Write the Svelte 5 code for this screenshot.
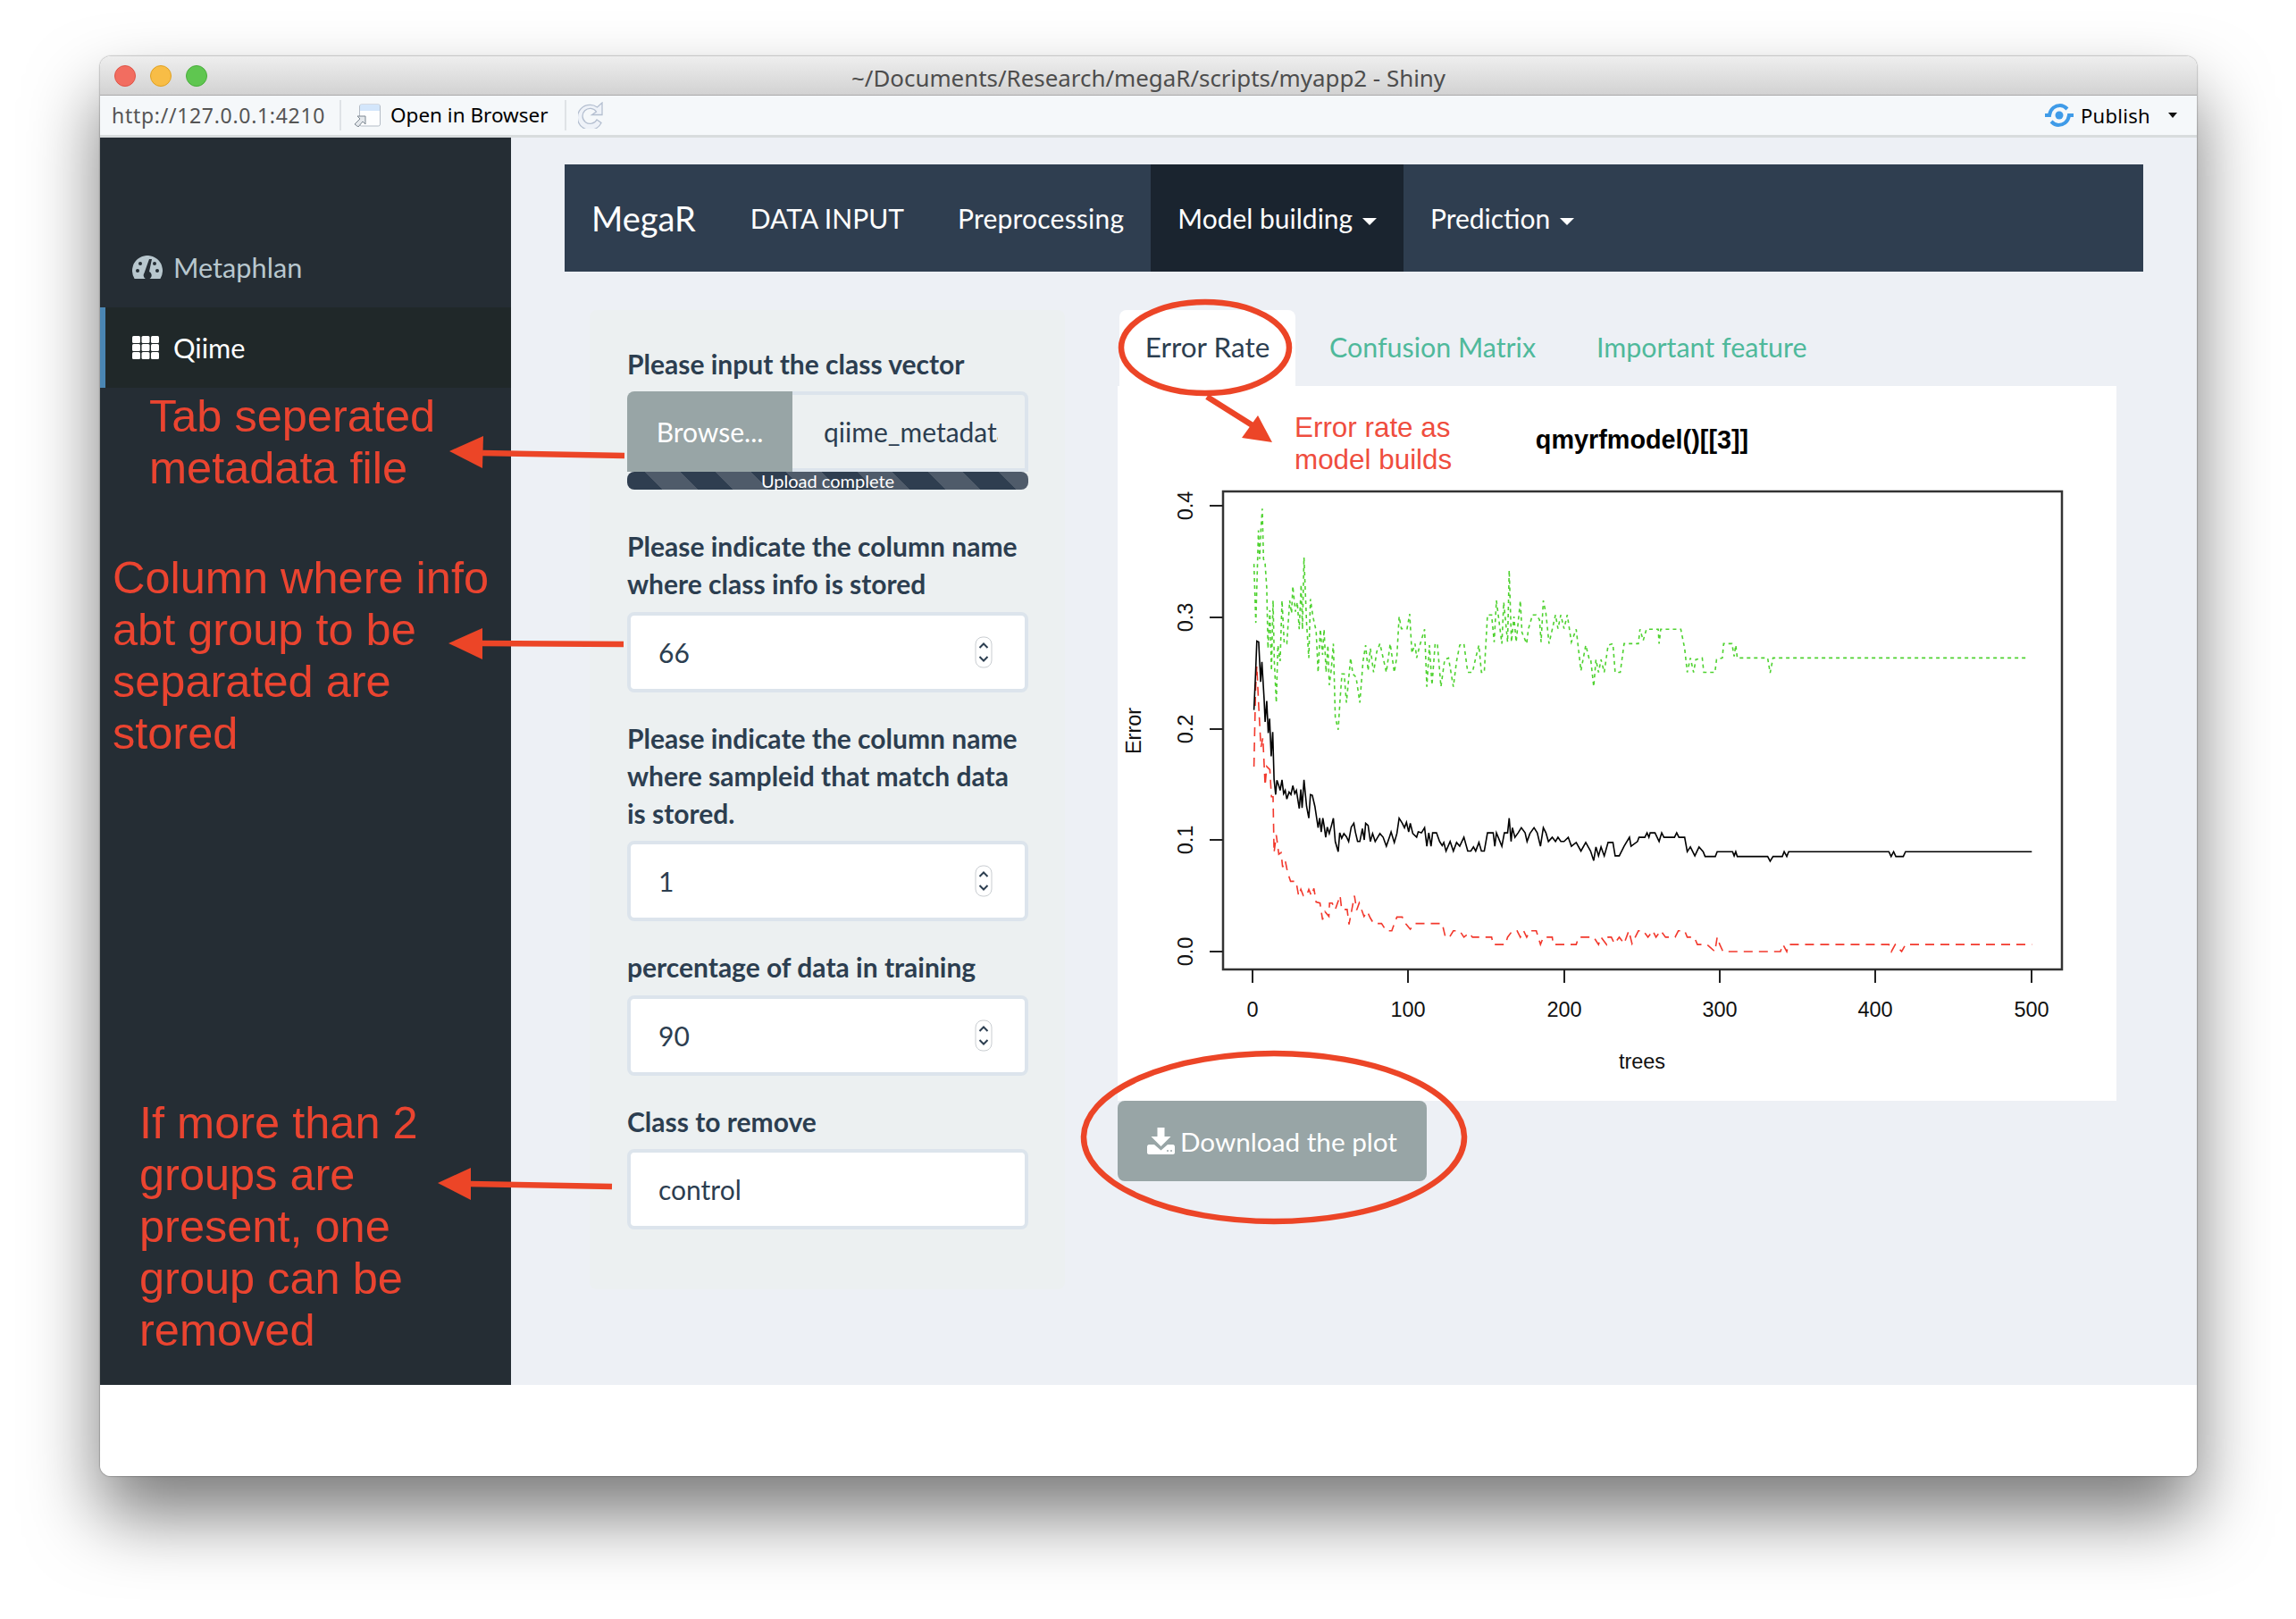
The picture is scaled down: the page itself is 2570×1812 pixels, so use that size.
<script>
  const numberFields = [
    { label: 'Please indicate the column name where class info is stored', value: '66' },
    { label: 'Please indicate the column name where sampleid that match data is stored.', value: '1' },
    { label: 'percentage of data in training', value: '90' }
  ];

  // traced off the plot, in 2.8x crop coordinates: [crop x origin, points...]
  const blackA = [290,713,295,600,299,497,305,500,311,625,315,562,322,680,325,750,330,685,335,785,339,740,344,858,349,782,353,930,358,978,362,933,368,950,372,965,378,932,383,975,388,965,393,992,400,970,406,978,412,950,418,975,423,965,432,1022,437,962,441,1020,447,932,455,1015,462,1052,467,978,473,980,481,1015,491,1082,496,1052,501,1095,506,1052,510,1075,515,1112,520,1080,526,1100,533,1075,539,1052,545,1125,554,1157,559,1098,565,1115,572,1100,580,1110,587,1125,595,1080,603,1068,608,1095,615,1125,622,1125,630,1085,636,1120,640,1068,648,1075,655,1125,662,1100,670,1125,685,1100,695,1112,705,1140,715,1110,720,1095,730,1128,738,1100,745,1052,755,1068,762,1082,768,1065,775,1095,780,1068,788,1100,800,1112,805,1095,815,1098,825,1082,832,1140,838,1098,845,1140,850,1098,862,1098,872,1125,880,1138,885,1128,892,1155,905,1125,915,1155,925,1128,935,1140,948,1112,960,1155,970,1155,978,1142,985,1155,995,1128,1003,1155,1012,1155,1022,1098,1040,1098,1045,1140,1050,1098,1067,1140,1075,1098,1085,1098,1090,1052,1096,1125,1100,1082,1108,1112,1118,1098,1128,1082,1140,1098,1146,1125,1155,1100,1168,1082,1178,1098,1188,1140,1197,1082,1205,1098,1213,1125,1225,1112,1235,1125,1243,1112,1252,1125,1262,1125,1275,1112,1285,1140,1300,1128,1315,1155,1330,1128,1345,1155,1355,1185,1362,1142,1370,1170,1378,1142,1388,1170,1400,1128];
  const blackB = [5,1128,15,1128,22,1170,35,1170,50,1140,67,1112,72,1140,92,1125,97,1112,115,1112,122,1098,128,1112,132,1098,147,1098,160,1125,168,1098,175,1112,208,1112,215,1098,222,1112,240,1112,248,1157,258,1142,272,1170,285,1142,298,1157,304,1172,336,1172,342,1157,390,1157,395,1170,400,1157,405,1172,500,1172,508,1187,517,1172,546,1172,552,1157,560,1172,566,1157,880,1157,887,1172,895,1157,902,1172,925,1172,932,1157,1328,1157];
  const greenA = [290,255,296,440,300,300,304,150,308,240,312,145,316,82,320,240,325,255,330,330,334,520,340,400,345,590,350,370,354,560,360,690,365,510,372,560,378,370,385,505,393,505,402,370,408,410,412,325,420,405,426,375,432,460,438,320,442,460,447,235,455,440,462,550,467,365,475,420,485,465,491,595,498,460,505,540,510,460,516,595,522,510,526,635,532,590,539,505,545,735,554,775,560,680,566,600,573,600,580,690,593,550,600,600,610,610,622,690,632,560,640,510,648,590,655,520,665,595,675,530,685,505,695,550,705,595,717,505,730,595,738,545,745,420,752,458,770,458,778,412,785,535,795,505,800,550,810,510,825,460,832,640,840,510,848,635,858,505,865,505,876,640,888,555,900,550,915,640,925,560,935,510,948,505,960,595,975,595,985,550,995,510,1003,595,1012,595,1022,415,1035,415,1043,500,1050,370,1067,505,1073,375,1085,500,1090,275,1097,500,1105,420,1112,500,1125,370,1130,470,1145,505,1150,460,1163,415,1175,415,1185,430,1190,500,1197,370,1205,410,1215,505,1225,460,1235,415,1243,458,1252,415,1262,458,1272,415,1285,500,1300,460,1315,590,1330,510,1340,550,1345,550,1355,640,1362,555,1370,595,1378,555,1388,595,1400,510];
  const greenB = [15,505,22,595,38,595,50,505,95,505,100,460,110,495,120,460,157,460,160,505,165,460,228,460,240,520,248,595,258,550,268,595,275,555,295,550,300,595,335,595,340,555,358,550,362,505,388,505,395,545,400,510,405,550,500,550,508,597,517,550,1318,550];
  const redA = [290,890,295,650,299,575,305,700,312,830,318,800,325,950,330,890,340,900,345,985,350,985,353,1160,360,1105,368,1165,375,1160,380,1205,388,1185,395,1220,405,1250,422,1250,430,1295,437,1275,445,1295,455,1295,462,1275,470,1295,478,1272,485,1315,497,1318,505,1370,513,1345,525,1360,527,1318,535,1318,545,1338,560,1295,565,1338,582,1338,588,1385,605,1295,612,1340,620,1318,635,1360,645,1345,655,1365,665,1382,690,1382,705,1405,722,1405,730,1382,738,1362,755,1362,765,1382,780,1400,795,1382,880,1382,890,1425,903,1425,915,1405,935,1405,948,1425,965,1412,975,1425,1035,1425,1040,1448,1078,1448,1085,1425,1100,1405,1115,1405,1125,1425,1135,1405,1145,1425,1155,1405,1175,1405,1188,1448,1197,1425,1225,1425,1228,1448,1300,1448,1308,1425,1355,1425,1370,1448,1378,1425,1395,1448,1400,1425];
  const redB = [10,1425,20,1445,35,1425,50,1445,65,1405,75,1445,95,1405,110,1405,125,1425,140,1405,150,1425,165,1405,180,1425,210,1425,220,1405,240,1405,248,1425,270,1425,280,1448,310,1448,335,1470,342,1425,350,1448,360,1470,540,1470,548,1448,560,1470,566,1448,880,1448,888,1470,900,1448,920,1470,932,1448,1328,1448];

  // crop coordinates -> plot panel coordinates
  function trace(a, b) {
    const pts = [];
    for (let i = 0; i < a.length; i += 2) pts.push(`${(1300 + a[i] / 2.8 - 1251).toFixed(1)},${(540 + a[i + 1] / 2.8 - 432).toFixed(1)}`);
    for (let i = 0; i < b.length; i += 2) pts.push(`${(1800 + b[i] / 2.8 - 1251).toFixed(1)},${(540 + b[i + 1] / 2.8 - 432).toFixed(1)}`);
    return pts.join(' ');
  }

  const xTicks = [[0, 151], [100, 325], [200, 500], [300, 674], [400, 848], [500, 1023]];
  const yTicks = [['0.0', 633], ['0.1', 508], ['0.2', 384], ['0.3', 259], ['0.4', 134]];
</script>

<div class="page">
  <div class="window">
    <div class="titlebar">
      <i class="light red"></i><i class="light yellow"></i><i class="light green"></i>
      <span class="title">~/Documents/Research/megaR/scripts/myapp2 - Shiny</span>
    </div>

    <div class="toolbar">
      <span class="url">http://127.0.0.1:4210</span>
      <span class="sep"></span>
      <svg class="open-icon" width="30" height="26" viewBox="0 0 30 26">
        <rect x="6.5" y="1" width="23" height="24" rx="2" fill="#fdfeff" stroke="#b4bcc6"/>
        <path d="M7 2.5a1.5 1.5 0 0 1 1.5-1.5h19a1.5 1.5 0 0 1 1.5 1.5V8H7z" fill="#d3e6fb"/>
        <path d="M1 23l6-6-3-3h9v9l-3-3-5 6z" fill="#e4e8ec" stroke="#7d8791"/>
      </svg>
      <span class="open">Open in Browser</span>
      <span class="sep"></span>
      <svg class="reload" width="28" height="30" viewBox="0 0 28 30">
        <path d="M20.500 11A8.500 8.500 0 1 0 21 20L26 23.500A14 14 0 1 1 21.500 6L27 1V14.500H15.500Z" fill="#eef2f8" stroke="#b4bfd0" stroke-width="1.300"/>
      </svg>
      <span class="push"></span>
      <svg width="32" height="26" viewBox="0 0 32 26" fill="none" stroke="#3f9be8" stroke-width="4">
        <circle cx="16" cy="13" r="4.500" fill="#3f9be8" stroke="none"/>
        <path d="M0 13H5C6 5 12 2 17 2c3 0 6 2 8 4"/>
        <path d="M32 13H27C26 21 20 24 15 24c-3 0-6-2-8-4"/>
      </svg>
      <span class="publish">Publish</span>
      <i class="publish-caret"></i>
    </div>

    <div class="app">
      <aside class="sidebar">
        <a class="side-item" href="#metaphlan">
          <svg width="34" height="26" viewBox="0 0 34 26">
            <path d="M2.600 26A17 17 0 1 1 31.400 26Z" fill="#b8c7ce"/>
            <g fill="#252d34">
              <circle cx="6" cy="17" r="2"/><circle cx="9" cy="9" r="2"/><circle cx="25" cy="9" r="2"/><circle cx="28" cy="17" r="2"/>
              <path d="M19 4h3l-3 14a4.500 4.500 0 1 1-5.500 1.500z"/>
            </g>
          </svg>
          <span>Metaphlan</span>
        </a>
        <a class="side-item active" href="#qiime">
          <svg width="30" height="26" viewBox="0 0 30 26" fill="#fff">
            {#each [0, 9, 18] as y}
              {#each [0, 10.500, 21] as x}
                <rect {x} {y} width="9" height="8" rx="1.500"/>
              {/each}
            {/each}
          </svg>
          <span>Qiime</span>
        </a>
      </aside>

      <main class="main">
        <nav class="navbar">
          <a class="brand" href="#home">MegaR</a>
          <a class="nav-link" href="#input">DATA INPUT</a>
          <a class="nav-link wide" href="#pre">Preprocessing</a>
          <a class="nav-link current" href="#model">Model building <i class="caret"></i></a>
          <a class="nav-link" href="#predict">Prediction <i class="caret"></i></a>
        </nav>

        <div class="columns">
          <form class="well">
            <div class="field file">
              <label for="meta">Please input the class vector</label>
              <div class="file-row">
                <span class="browse">Browse...</span>
                <input id="meta" class="file-name" readonly value="qiime_metadata.txt" />
              </div>
              <div class="progress"><span>Upload complete</span></div>
            </div>

            {#each numberFields as f}
              <div class="field">
                <label for={f.value}>{f.label}</label>
                <div class="input-box">
                  <input id={f.value} value={f.value} />
                  <svg width="20" height="36" viewBox="0 0 20 36" fill="none">
                    <rect x="1" y="1" width="18" height="34" rx="8" fill="#fff" stroke="#c9cdd1"/>
                    <path d="M5.500 13l4.500-4.500 4.500 4.500M5.500 23l4.500 4.500 4.500-4.500" stroke="#2c3e50" stroke-width="2"/>
                  </svg>
                </div>
              </div>
            {/each}

            <div class="field last">
              <label for="cls">Class to remove</label>
              <div class="input-box"><input id="cls" value="control" /></div>
            </div>
          </form>

          <section class="results">
            <div class="tabs">
              <a class="tab active" href="#err">Error Rate</a>
              <a class="tab" href="#conf">Confusion Matrix</a>
              <a class="tab" href="#imp">Important feature</a>
            </div>
            <div class="panel">
              <svg class="plot" width="1118" height="800" viewBox="0 0 1118 800">
                <text x="587" y="70" class="plot-title" text-anchor="middle">qmyrfmodel()[[3]]</text>
                <rect x="118" y="118" width="939" height="535" fill="none" stroke="#333" stroke-width="2.500"/>
                <polyline points={trace(greenA, greenB)} fill="none" stroke="#4fd230" stroke-width="1.600" stroke-dasharray="4 4"/>
                <polyline points={trace(redA, redB)} fill="none" stroke="#f2382c" stroke-width="1.600" stroke-dasharray="10 7"/>
                <polyline points={trace(blackA, blackB)} fill="none" stroke="#000" stroke-width="1.600"/>
                {#each xTicks as [label, x]}
                  <line x1={x} x2={x} y1="653" y2="668" stroke="#222" stroke-width="2"/>
                  <text {x} y="706" class="axis" text-anchor="middle">{label}</text>
                {/each}
                {#each yTicks as [label, y]}
                  <line x1="103" x2="118" y1={y} y2={y} stroke="#222" stroke-width="2"/>
                  <text x="84" y={y} class="axis" text-anchor="middle" transform="rotate(-90 84 {y})">{label}</text>
                {/each}
                <text x="587" y="764" class="axis" text-anchor="middle">trees</text>
                <text x="26" y="386" class="axis" text-anchor="middle" transform="rotate(-90 26 386)">Error</text>
              </svg>
            </div>
            <button class="download" type="button">
              <svg width="31" height="30" viewBox="0 0 31 30" fill="#fff">
                <path d="M11.500 0h8v10h7L15.500 21 4.500 10h7z"/>
                <path d="M0 21.500c0-1.500 1-2.500 2-2.500h6l7.500 6.500L23 19h6c1 0 2 1 2 2.500V28c0 1-1 2-2 2H2c-1 0-2-1-2-2z"/>
                <circle cx="23" cy="26" r="1" fill="#98a5a6"/><circle cx="27" cy="26" r="1" fill="#98a5a6"/>
              </svg>
              Download the plot
            </button>
          </section>
        </div>
      </main>
    </div>

    <div class="footer-space"></div>
  </div>

  <!-- hand-drawn notes on top of the app -->
  <svg class="marks" width="2570" height="1812" viewBox="0 0 2570 1812">
    <g fill="none" stroke="#ec4527" stroke-width="6.500">
      <ellipse cx="1349" cy="389" rx="94" ry="51"/>
      <ellipse cx="1426" cy="1273" rx="213" ry="94"/>
      <path d="M699 510L540 507M698 721L538 720M685 1328L526 1325M1351 444L1405 478" stroke-linecap="butt"/>
    </g>
    <g fill="#ec4527">
      <path d="M503 505L541 488L540 524Z"/>
      <path d="M502 720L540 703L540 738Z"/>
      <path d="M490 1324L527 1307L527 1343Z"/>
      <path d="M1424 495L1408 465L1390 490Z"/>
    </g>
  </svg>
  <div class="note note-tab">Tab seperated<br />metadata file</div>
  <div class="note note-col">Column where info<br />abt group to be<br />separated are<br />stored</div>
  <div class="note note-more">If more than 2<br />groups are<br />present, one<br />group can be<br />removed</div>
  <div class="note-small">Error rate as<br />model builds</div>
</div>

<style>
  :global(body) { margin: 0; background: #fff; }

  .page { position: relative; width: 2570px; height: 1812px; overflow: hidden; padding: 63px 111px 0 112px; box-sizing: border-box; font-family: Lato, sans-serif; color: #2c3e50; }

  .window { position: relative; display: flex; flex-direction: column; height: 1589px; border-radius: 12px; overflow: hidden; background: #fff; }
  .page::before { content: ''; position: absolute; left: 112px; top: 63px; width: 2347px; height: 1589px; border-radius: 12px; box-shadow: 0 44px 80px rgba(0, 0, 0, 0.52), 0 0 2px rgba(0, 0, 0, 0.6); }

  .titlebar { position: relative; flex: none; height: 43px; display: flex; align-items: center; padding-left: 16px; gap: 16px; background: linear-gradient(#eeeeee, #d2d2d2); border-bottom: 1px solid #a9a9a9; }
  .light { width: 24px; height: 24px; border-radius: 50%; box-sizing: border-box; }
  .red { background: #f26d60; border: 1px solid #de5548; }
  .yellow { background: #f8bd46; border: 1px solid #dfa123; }
  .green { background: #5fc650; border: 1px solid #4aad3c; }
  .title { position: absolute; left: 0; right: 0; top: 9px; text-align: center; font: 25.900px/30px "Noto Sans", sans-serif; color: #4d4d4d; }

  .toolbar { flex: none; height: 44px; display: flex; align-items: center; background: #f5f8fa; border-bottom: 3px solid #d8dcdd; padding-left: 13px; padding-right: 22px; font: 23px/30px "Noto Sans", sans-serif; }
  .url { width: 255px; color: #555; letter-spacing: 0.7px; }
  .sep { width: 2px; height: 34px; background: #dfe3e6; }
  .open-icon { margin: 0 11px 0 14px; }
  .open { width: 195px; color: #000; font-size: 22.500px; }
  .reload { margin-left: 13px; }
  .push { flex: 1; }
  .publish { color: #000; margin-left: 8px; font-size: 22px; letter-spacing: 0.3px; }
  .publish-caret { margin-left: 20px; width: 0; height: 0; border: 5px solid transparent; border-top: 6px solid #111; border-bottom: 0; }

  .app { flex: none; display: flex; height: 1396px; }
  .sidebar { flex: none; width: 460px; padding-top: 100px; box-sizing: border-box; background: #252d34; }
  .side-item { display: flex; align-items: center; gap: 12px; height: 90px; padding-left: 36px; font-size: 30.700px; color: #b8c7ce; text-decoration: none; box-sizing: border-box; }
  .side-item.active { background: #202829; color: #fff; border-left: 6px solid #4a86b3; padding-left: 30px; gap: 16px; }

  .main { flex: 1; padding: 30px 60px 0; background: #edf0f5; }
  .navbar { display: flex; height: 120px; background: #2f3e50; font-size: 30px; }
  .brand { padding: 0 31px 0 30px; font-size: 38px; line-height: 120px; color: #fff; text-decoration: none; }
  .nav-link { padding: 0 30px; line-height: 120px; color: #fff; text-decoration: none; }
  .nav-link.wide { letter-spacing: 0.22px; }
  .nav-link.current { background: #1a242f; }
  .caret { display: inline-block; vertical-align: middle; margin-left: 3px; width: 0; height: 0; border: 8px solid transparent; border-top: 8px solid #fff; border-bottom: 0; }

  .columns { display: flex; align-items: flex-start; margin: 43px 0 0 28px; }

  .well { flex: none; width: 532px; height: 1096px; box-sizing: border-box; padding: 39px 41px 0 42px; background: #ecf0f1; border-radius: 8px; }
  .field { margin-bottom: 30px; }
  .field.file { margin-bottom: 42px; }
  label { display: block; margin-bottom: 10.500px; font-size: 30px; font-weight: 700; line-height: 42px; }
  .file label { margin-bottom: 10px; }

  .file-row { display: flex; height: 90px; }
  .browse { flex: none; width: 185px; display: flex; align-items: center; justify-content: center; background: #98a5a6; color: #fff; font-size: 30px; border-radius: 8px 0 0 0; }
  .file-name { flex: 1; min-width: 0; box-sizing: border-box; padding: 0 30px 0 35px; background: #ecf0f1; border: 4px solid #dce4ec; border-left: 0; border-radius: 0 8px 0 0; font: 30px Lato, sans-serif; color: #2c3e50; outline: none; }
  .progress { height: 20px; border-radius: 8px; text-align: center; font-size: 20px; line-height: 20px; color: #fff; background: repeating-linear-gradient(45deg, #2f3e50 0, #2f3e50 28px, #4f5b6a 28px, #4f5b6a 56px); }

  .input-box { display: flex; align-items: center; height: 90px; box-sizing: border-box; padding-right: 36px; background: #fff; border: 4px solid #dce4ec; border-radius: 8px; }
  .input-box input { flex: 1; min-width: 0; padding: 0 31px; border: 0; background: none; font: 30px Lato, sans-serif; color: #2c3e50; outline: none; }

  .results { flex: none; width: 1118px; margin-left: 59px; }
  .tabs { display: flex; height: 85px; margin-left: 2px; gap: 8px; }
  .tab { padding: 0 30px; font-size: 30.400px; line-height: 82px; color: #4fb99b; text-decoration: none; }
  .tab.active { width: 197px; padding: 0; box-sizing: border-box; text-align: center; font-size: 31.500px; background: #fff; color: #2c3e50; border-radius: 8px 8px 0 0; }

  .panel { height: 800px; background: #fff; }
  .plot { display: block; }
  .plot-title { font: bold 28.800px "Liberation Sans", sans-serif; fill: #000; }
  .axis { font: 23.500px "Liberation Sans", sans-serif; fill: #111; }

  .download { display: flex; align-items: center; justify-content: center; gap: 6px; width: 346px; height: 90px; padding: 0; border: 0; border-radius: 8px; background: #98a5a6; color: #fff; font: 29.700px Lato, sans-serif; }

  .marks { position: absolute; left: 0; top: 0; pointer-events: none; }
  .note { position: absolute; font: 50.500px/58px "Liberation Sans", sans-serif; color: #ea4430; }
  .note-tab { left: 167px; top: 437px; }
  .note-col { left: 126px; top: 618px; }
  .note-more { left: 156px; top: 1228px; }
  .note-small { position: absolute; left: 1449px; top: 461px; font: 31.400px/36px "Liberation Sans", sans-serif; color: #ef4d3e; }
</style>
